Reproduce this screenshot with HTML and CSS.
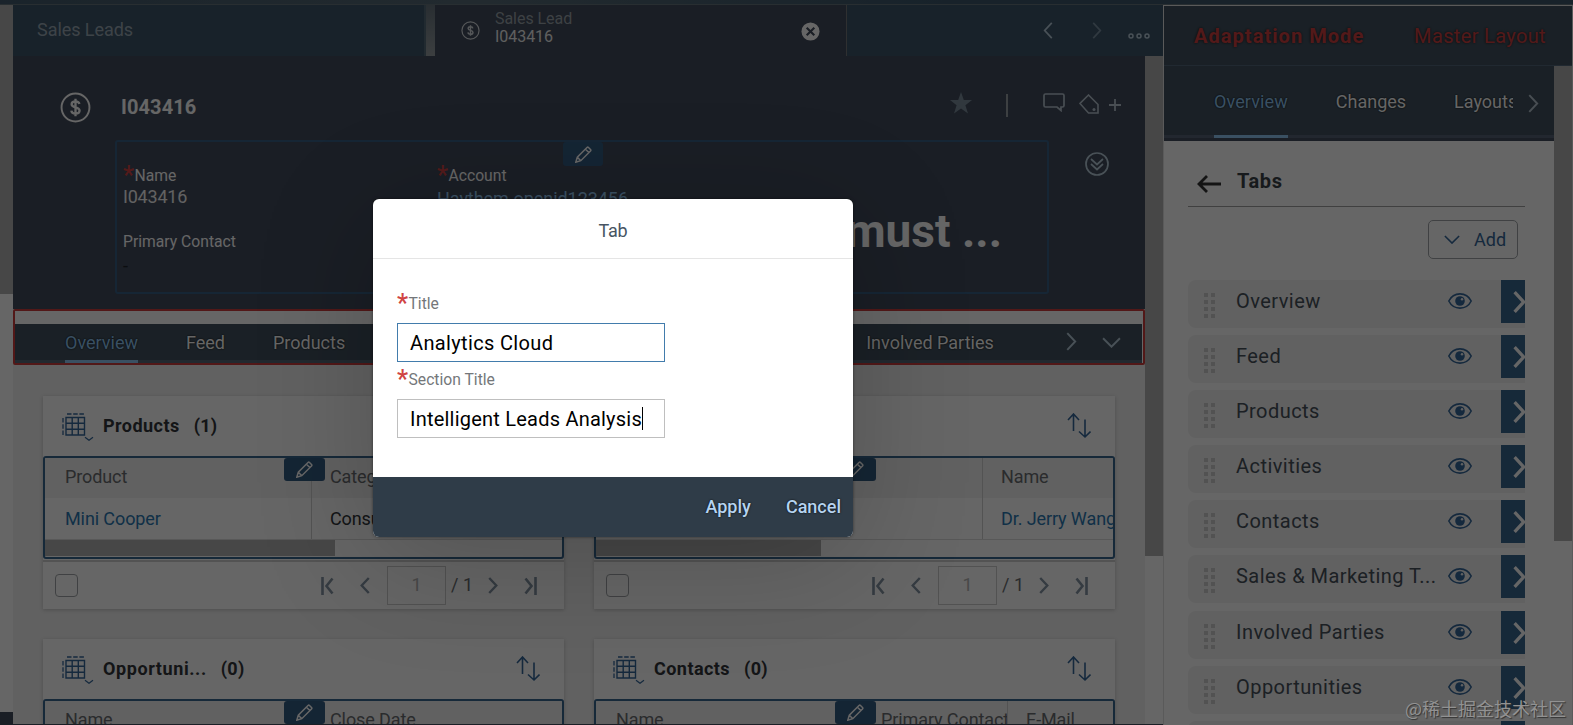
FILE: index.html
```html
<!DOCTYPE html>
<html lang="en">
<head>
    <meta charset="UTF-8">
    <meta name="viewport" content="width=device-width, initial-scale=1.0">
    <title>Sales Lead I043416</title>
    <link rel="stylesheet" href="styles.css">
</head>
<body>
    <svg class="sprite" aria-hidden="true">
        <symbol id="i-dollar" viewBox="0 0 32 32">
            <circle cx="16" cy="16" r="14.400" fill="none" stroke="currentColor" stroke-width="2"/>
            <path d="M20 12.400c-.3-1.800-1.900-2.700-4-2.700-2.300 0-4 1.100-4 3 0 4.400 8.200 1.900 8.200 6.500 0 2-1.800 3.100-4.200 3.100-2.300 0-4.100-1-4.300-3.100M16 7v18" fill="none" stroke="currentColor" stroke-width="2.400"/>
        </symbol>
        <symbol id="i-left" viewBox="0 0 10 18"><path d="M9 1L1.500 9 9 17" fill="none" stroke="currentColor"/></symbol>
        <symbol id="i-right" viewBox="0 0 10 18"><path d="M1 1l7.500 8L1 17" fill="none" stroke="currentColor"/></symbol>
        <symbol id="i-down" viewBox="0 0 18 10"><path d="M1 1l8 8 8-8" fill="none" stroke="currentColor"/></symbol>
        <symbol id="i-pencil" viewBox="0 0 17 17">
            <path d="M.8 16.200l1.500-5L12 1.500c.5-.5 1-.5 1.500 0l2 2c.5.5.5 1 0 1.500L5.800 14.700zM10.500 3.200l3.300 3.300M2.300 11.200l3.500 3.500" fill="none" stroke="currentColor" stroke-width="1.500"/>
        </symbol>
        <symbol id="i-eye" viewBox="0 0 24 16">
            <path d="M.8 8C3 3.600 7 .9 12 .9S21 3.600 23.200 8C21 12.400 17 15.100 12 15.100S3 12.400.8 8z" fill="none" stroke="currentColor" stroke-width="1.600"/>
            <circle cx="12" cy="8" r="4.800" fill="currentColor"/>
            <circle cx="14" cy="6.300" r="1.200" fill="#f2f2f2"/>
        </symbol>
        <symbol id="i-grid" viewBox="0 0 32 28">
            <path d="M4 4.500h18.500V22H4zM4 10.300h18.500M4 16.200h18.500M10.200 4.500V22M16.300 4.500V22" fill="none" stroke="currentColor" stroke-width="1.400"/>
            <path d="M5 1h17" fill="none" stroke="currentColor" stroke-width="1.600" stroke-dasharray="4.500 1.700"/>
            <path d="M1 5v17" fill="none" stroke="currentColor" stroke-width="1.300" stroke-dasharray="4.500 1.700"/>
            <path d="M23 24.300l4 3 4-3" fill="none" stroke="currentColor" stroke-width="1.200"/>
        </symbol>
        <symbol id="i-sort" viewBox="0 0 24 26">
            <path d="M1 7l5.500-6L12 7M6.500 1v17M12 18.500l6 5.500 5.500-5.500M18 24V6.500" fill="none" stroke="currentColor" stroke-width="1.600"/>
        </symbol>
        <symbol id="i-first" viewBox="0 0 13 18"><path d="M1.500 0v18M11.500 1.500L5.500 9l6 7.500" fill="none" stroke="currentColor" stroke-width="2.600"/></symbol>
        <symbol id="i-last" viewBox="0 0 13 18"><path d="M11.500 0v18M1.500 1.500l6 7.500-6 7.500" fill="none" stroke="currentColor" stroke-width="2.600"/></symbol>
        <symbol id="i-dots" viewBox="0 0 11 26">
            <path d="M0 0h4v4H0zM7 0h4v4H7zM0 7h4v4H0zM7 7h4v4H7zM0 14h4v4H0zM7 14h4v4H7zM0 21h4v4H0zM7 21h4v4H7z" fill="currentColor"/>
        </symbol>
    </svg>

    <div class="app">
        <div class="shell-bar"></div>
        <div class="workspace">
            <div class="gutter"></div>

            <div class="main">
                <div class="tab-strip">
                    <div class="page-tab">Sales Leads</div>
                    <div class="tab-split"></div>
                    <div class="page-tab active">
                        <svg class="tab-icon"><use href="#i-dollar"/></svg>
                        <div class="tab-text">
                            <span class="tab-kind">Sales Lead</span>
                            <span class="tab-name">I043416</span>
                        </div>
                        <svg class="tab-close" viewBox="0 0 20 20"><circle cx="10" cy="10" r="9.500" fill="#fff"/><path d="M6 6l8 8M14 6l-8 8" stroke="#414b5c" stroke-width="2.200"/></svg>
                    </div>
                    <div class="tab-nav">
                        <svg class="nav-arrow"><use href="#i-left"/></svg>
                        <svg class="nav-arrow dim"><use href="#i-right"/></svg>
                        <svg class="nav-more" viewBox="0 0 22 6"><g fill="none" stroke="currentColor" stroke-width="1.500"><circle cx="3" cy="3" r="2"/><circle cx="11" cy="3" r="2"/><circle cx="19" cy="3" r="2"/></g></svg>
                    </div>
                </div>

                <div class="page">
                    <div class="scroll-area">
                        <div class="object-header">
                            <div class="title-row">
                                <svg class="object-icon"><use href="#i-dollar"/></svg>
                                <h1>I043416</h1>
                                <svg class="star" viewBox="0 0 22 22"><path d="M11 0l2.800 8H22l-6.600 5.200L18 21.500l-7-4.900-7 4.900 2.600-8.300L0 8h8.200z" fill="currentColor"/></svg>
                                <span class="bar"></span>
                                <svg class="comment" viewBox="0 0 22 19"><path d="M2.500 1h17C20.500 1 21 1.500 21 2.500v10c0 1-.5 1.500-1.500 1.500H18v3.500L14 14H2.500C1.500 14 1 13.500 1 12.500v-10C1 1.500 1.500 1 2.500 1z" fill="none" stroke="currentColor" stroke-width="1.700"/></svg>
                                <svg class="tag" viewBox="0 0 20 20"><path d="M9.500 1L1 9.500 9.500 19H19v-8.500z" fill="none" stroke="currentColor" stroke-width="1.600"/><circle cx="15" cy="15.500" r="1.500" fill="currentColor"/></svg>
                                <svg class="plus" viewBox="0 0 12 12"><path d="M6 0v12M0 6h12" stroke="currentColor" stroke-width="1.800"/></svg>
                            </div>
                            <div class="facts-row">
                                <div class="facts">
                                    <div class="edit-tag"><svg><use href="#i-pencil"/></svg></div>
                                    <div class="fact-col">
                                        <div class="label"><b class="req">*</b>Name</div>
                                        <div class="value">I043416</div>
                                        <div class="label second">Primary Contact</div>
                                        <div class="value empty">-</div>
                                    </div>
                                    <div class="fact-col">
                                        <div class="label"><b class="req">*</b>Account</div>
                                        <div class="value link">Haythem.openid123456</div>
                                    </div>
                                    <div class="headline">must ...</div>
                                </div>
                                <svg class="expand" viewBox="0 0 24 24"><g fill="none" stroke="currentColor" stroke-width="1.700"><circle cx="12" cy="12" r="11"/><path d="M6 7l6 5.500L18 7M6 12l6 5.500 6-5.500"/></g></svg>
                            </div>
                        </div>

                        <div class="tabs-frame">
                            <div class="tabs">
                                <span class="tab selected">Overview</span>
                                <span class="tab">Feed</span>
                                <span class="tab">Products</span>
                                <span class="tab last">Involved Parties</span>
                                <svg class="tabs-next"><use href="#i-right"/></svg>
                                <svg class="tabs-down"><use href="#i-down"/></svg>
                            </div>
                        </div>

                        <div class="cards">
                            <section class="card">
                                <div class="card-head">
                                    <svg class="grid-icon"><use href="#i-grid"/></svg>
                                    <h2>Products</h2><span class="count">(1)</span>
                                    <svg class="sort"><use href="#i-sort"/></svg>
                                </div>
                                <div class="table">
                                    <div class="edit-tag"><svg><use href="#i-pencil"/></svg></div>
                                    <div class="row head"><span class="cell wide">Product</span><span class="cell">Category</span></div>
                                    <div class="row"><span class="cell wide link">Mini Cooper</span><span class="cell">Consumer Goods</span></div>
                                    <div class="h-scroll"><i class="thumb long"></i></div>
                                </div>
                                <div class="pager">
                                    <span class="check"></span>
                                    <svg class="p-first"><use href="#i-first"/></svg>
                                    <svg class="p-prev"><use href="#i-left"/></svg>
                                    <span class="p-input">1</span>
                                    <span class="p-total">/ 1</span>
                                    <svg class="p-next"><use href="#i-right"/></svg>
                                    <svg class="p-last"><use href="#i-last"/></svg>
                                </div>
                            </section>

                            <section class="card">
                                <div class="card-head">
                                    <svg class="grid-icon"><use href="#i-grid"/></svg>
                                    <svg class="sort"><use href="#i-sort"/></svg>
                                </div>
                                <div class="table">
                                    <div class="edit-tag"><svg><use href="#i-pencil"/></svg></div>
                                    <div class="row head"><span class="cell wider"></span><span class="cell">Name</span></div>
                                    <div class="row"><span class="cell wider"></span><span class="cell link">Dr. Jerry Wang</span></div>
                                    <div class="h-scroll"><i class="thumb"></i></div>
                                </div>
                                <div class="pager">
                                    <span class="check"></span>
                                    <svg class="p-first"><use href="#i-first"/></svg>
                                    <svg class="p-prev"><use href="#i-left"/></svg>
                                    <span class="p-input">1</span>
                                    <span class="p-total">/ 1</span>
                                    <svg class="p-next"><use href="#i-right"/></svg>
                                    <svg class="p-last"><use href="#i-last"/></svg>
                                </div>
                            </section>

                            <section class="card">
                                <div class="card-head">
                                    <svg class="grid-icon"><use href="#i-grid"/></svg>
                                    <h2 class="spaced">Opportuni...</h2><span class="count">(0)</span>
                                    <svg class="sort"><use href="#i-sort"/></svg>
                                </div>
                                <div class="table">
                                    <div class="edit-tag"><svg><use href="#i-pencil"/></svg></div>
                                    <div class="row head"><span class="cell wide">Name</span><span class="cell">Close Date</span></div>
                                </div>
                            </section>

                            <section class="card">
                                <div class="card-head">
                                    <svg class="grid-icon"><use href="#i-grid"/></svg>
                                    <h2>Contacts</h2><span class="count">(0)</span>
                                    <svg class="sort"><use href="#i-sort"/></svg>
                                </div>
                                <div class="table">
                                    <div class="edit-tag"><svg><use href="#i-pencil"/></svg></div>
                                    <div class="row head"><span class="cell wide">Name</span><span class="cell contact">Primary Contact</span><span class="cell">E-Mail</span></div>
                                </div>
                            </section>
                        </div>
                    </div>
                    <div class="v-scroll"></div>
                </div>
            </div>

            <aside class="panel">
                <div class="panel-title"><strong>Adaptation Mode</strong><span>Master Layout</span></div>
                <div class="panel-page">
                    <div class="panel-content">
                        <div class="panel-tabs">
                            <span class="tab selected">Overview</span>
                            <span class="tab">Changes</span>
                            <span class="tab cut">Layouts</span>
                            <svg class="tabs-next"><use href="#i-right"/></svg>
                        </div>
                        <div class="panel-body">
                            <div class="panel-heading">
                                <svg class="back" viewBox="0 0 24 18"><path d="M10 1L2 9l8 8M2 9h22" fill="none" stroke="currentColor" stroke-width="2.800"/></svg>
                                <h3>Tabs</h3>
                            </div>
                            <button class="add"><svg><use href="#i-down"/></svg>Add</button>
                            <div class="items">
                                <div class="item"><svg class="grip"><use href="#i-dots"/></svg><span>Overview</span><svg class="eye"><use href="#i-eye"/></svg><i class="go"><svg><use href="#i-right"/></svg></i></div>
                                <div class="item"><svg class="grip"><use href="#i-dots"/></svg><span>Feed</span><svg class="eye"><use href="#i-eye"/></svg><i class="go"><svg><use href="#i-right"/></svg></i></div>
                                <div class="item"><svg class="grip"><use href="#i-dots"/></svg><span>Products</span><svg class="eye"><use href="#i-eye"/></svg><i class="go"><svg><use href="#i-right"/></svg></i></div>
                                <div class="item"><svg class="grip"><use href="#i-dots"/></svg><span>Activities</span><svg class="eye"><use href="#i-eye"/></svg><i class="go"><svg><use href="#i-right"/></svg></i></div>
                                <div class="item"><svg class="grip"><use href="#i-dots"/></svg><span>Contacts</span><svg class="eye"><use href="#i-eye"/></svg><i class="go"><svg><use href="#i-right"/></svg></i></div>
                                <div class="item"><svg class="grip"><use href="#i-dots"/></svg><span>Sales &amp; Marketing T...</span><svg class="eye"><use href="#i-eye"/></svg><i class="go"><svg><use href="#i-right"/></svg></i></div>
                                <div class="item"><svg class="grip"><use href="#i-dots"/></svg><span>Involved Parties</span><svg class="eye"><use href="#i-eye"/></svg><i class="go"><svg><use href="#i-right"/></svg></i></div>
                                <div class="item"><svg class="grip"><use href="#i-dots"/></svg><span>Opportunities</span><svg class="eye"><use href="#i-eye"/></svg><i class="go"><svg><use href="#i-right"/></svg></i></div>
                                <div class="item"><i class="go"></i></div>
                            </div>
                        </div>
                    </div>
                    <div class="panel-scroll"></div>
                </div>
            </aside>
        </div>
    </div>

    <div class="backdrop"></div>

    <div class="dialog">
        <div class="dialog-title">Tab</div>
        <div class="dialog-body">
            <div class="label"><b class="req">*</b>Title</div>
            <div class="field focus">Analytics Cloud</div>
            <div class="label"><b class="req">*</b>Section Title</div>
            <div class="field">Intelligent Leads Analysis<i class="caret"></i></div>
        </div>
        <div class="dialog-footer"><span>Apply</span><span>Cancel</span></div>
    </div>

    <div class="watermark">@稀土掘金技术社区</div>
</body>
</html>
```

FILE: styles.css
```css
* {
    box-sizing: border-box;
}

body {
    margin: 0;
    width: 1573px;
    height: 725px;
    overflow: hidden;
    position: relative;
    background: #fff;
    font-family: Roboto, "Liberation Sans", sans-serif;
    font-size: 18px;
    color: #32363a;
}

h1, h2, h3 {
    margin: 0;
}

svg {
    display: block;
    flex: none;
    stroke-width: 1.8px;
}

.sprite {
    position: absolute;
    width: 0;
    height: 0;
}

.app {
    height: 725px;
    display: flex;
    flex-direction: column;
}

.shell-bar {
    height: 5px;
    flex: none;
    background: linear-gradient(90deg, #42596b, #566a76 30%, #3c566a 60%, #3c566a);
    border-bottom: 1px solid #64737c;
}

.workspace {
    flex: 1;
    display: flex;
    min-height: 0;
}

.gutter {
    width: 13px;
    background: linear-gradient(#b1b1b1 289px, #fff 289px, #fff 707px, #414b5c 707px);
}

.main {
    width: 1150px;
    display: flex;
    flex-direction: column;
}

/* open pages */
.tab-strip {
    height: 51px;
    flex: none;
    display: flex;
    background: #3d566a;
}

.page-tab {
    width: 411px;
    padding-left: 24px;
    line-height: 49px;
    color: #9aa9b4;
    letter-spacing: -0.05px;
}

.page-tab.active {
    width: 412px;
    padding-left: 26px;
    background: #414b5c;
    border-right: 1px solid #75787a;
    display: flex;
    align-items: center;
    font-size: 16px;
}

.tab-split {
    width: 11px;
    border-left: 2px solid #536a78;
    background: linear-gradient(#66737d, #969da1);
}

.tab-icon {
    width: 19px;
    height: 19px;
    color: #d5dade;
}

.tab-text {
    display: flex;
    flex-direction: column;
    line-height: 18px;
    margin: -3px 0 0 15px;
    height: 39px;
}

.tab-kind {
    color: #9aa3ab;
}

.tab-name {
    color: #eee;
}

.tab-close {
    width: 19px;
    height: 19px;
    margin: 1px 26px 0 auto;
}

.tab-nav {
    flex: 1;
    display: flex;
    color: #b6cbd9;
}

.nav-arrow {
    width: 10px;
    height: 17px;
    margin: 17px 0 0 196px;
}

.nav-arrow.dim {
    margin-left: 39px;
    opacity: .5;
}

.nav-more {
    width: 22px;
    height: 6px;
    margin: 28px 0 0 26px;
}

.page {
    flex: 1;
    display: flex;
    min-height: 0;
}

.scroll-area {
    width: 1132px;
    overflow: hidden;
    background: #f2f2f2;
    border-bottom: 1px solid #414b5c;
}

.v-scroll {
    width: 18px;
    border-bottom: 1px solid #414b5c;
    background: linear-gradient(#b1b1b1 500px, #fff 500px);
}

/* object header */
.object-header {
    height: 253px;
    background: #414b5c;
}

.title-row {
    display: flex;
    align-items: flex-start;
    padding: 36px 24px 0 47px;
    height: 84px;
    color: #b6c3cf;
}

.object-icon {
    width: 31px;
    height: 31px;
    color: #fff;
}

h1 {
    flex: 1;
    margin-left: 30px;
    font-size: 20px;
    line-height: 30px;
    letter-spacing: 0.1px;
    color: #fff;
}

.star {
    width: 22px;
    height: 22px;
    color: #7a8c9b;
}

.bar {
    width: 2px;
    height: 23px;
    margin: 2px 35px 0 34px;
    background: #9aa1a5;
}

.comment {
    width: 22px;
    height: 19px;
    margin-top: 1px;
}

.tag {
    width: 20px;
    height: 20px;
    margin: 2px 10px 0 14px;
}

.plus {
    width: 12px;
    height: 12px;
    margin-top: 7px;
}

.facts-row {
    display: flex;
    padding-left: 102px;
}

.facts {
    width: 934px;
    height: 154px;
    border: 2px solid #375f86;
    border-radius: 3px;
    display: flex;
    padding: 23px 45px 0 6px;
    position: relative;
}

.edit-tag {
    position: absolute;
    top: 0;
    left: 446px;
    width: 40px;
    height: 24px;
    display: flex;
    justify-content: center;
    align-items: center;
    background: #335c82;
    border-radius: 3px;
    color: #fff;
}

.edit-tag svg {
    width: 17px;
    height: 17px;
}

.fact-col {
    width: 314px;
}

.fact-col:nth-of-type(3) {
    width: 190px;
}

.label {
    display: flex;
    height: 20px;
    line-height: 21px;
    font-size: 15.7px;
    color: #fff;
    white-space: nowrap;
}

.req {
    width: 11.5px;
    height: 20px;
    font-size: 25px;
    font-weight: 500;
    line-height: 22px;
    color: #d04343;
}

.value {
    line-height: 24px;
    letter-spacing: -0.2px;
    color: #f4f4f4;
}

.label.second {
    margin-top: 22px;
}

.value.empty {
    line-height: 30px;
    color: #1d2129;
}

.value.link {
    color: #91c8f6;
    line-height: 28px;
    letter-spacing: -0.05px;
}

.headline {
    margin-left: auto;
    padding-top: 36px;
    font-size: 46px;
    font-weight: bold;
    line-height: 60px;
    color: #fff;
}

.expand {
    width: 24px;
    height: 24px;
    margin: 12px 0 0 36px;
    color: #b6cbd9;
}

/* anchor tabs */
.tabs-frame {
    height: 56px;
    padding: 13px 1px 0 0;
    background: #fff;
    border: 2px solid #cc3d3d;
    border-radius: 2px;
}

.tabs {
    height: 39px;
    display: flex;
    padding-left: 50px;
    background: linear-gradient(#425260 36px, #556775 36px);
    color: #b6cbd9;
}

.tab {
    margin-right: 48px;
    line-height: 37px;
    color: #fff;
    white-space: nowrap;
    text-shadow: 0 0 2px #000;
}

.tab.selected {
    color: #91c8f6;
    border-bottom: 3px solid #91c8f6;
}

.tab.last {
    margin-left: 473px;
    margin-right: 72px;
}

.tabs-next {
    width: 11px;
    height: 19px;
    margin-top: 8px;
}

.tabs-down {
    width: 19px;
    height: 11px;
    margin: 13px 0 0 25px;
}

/* cards */
.cards {
    display: grid;
    grid-template-columns: 521px 521px;
    gap: 30px;
    padding: 31px 0 0 30px;
}

.card {
    height: 213px;
    background: #fff;
    box-shadow: 0 1px 4px rgba(0, 0, 0, .2);
}

.card-head {
    height: 60px;
    display: flex;
    padding: 17px 24px 0 19px;
    color: #35679a;
}

.grid-icon {
    width: 32px;
    height: 28px;
}

h2, .count {
    margin-left: 9px;
    font-size: 18px;
    font-weight: bold;
    line-height: 25px;
    letter-spacing: 0.45px;
    color: #32363a;
}

h2.spaced {
    letter-spacing: 0.6px;
}

.count {
    margin-left: 14px;
    letter-spacing: 0.3px;
}

.sort {
    width: 24px;
    height: 26px;
    margin-left: auto;
}

.table {
    height: 103px;
    border: 2px solid #38668f;
    border-radius: 3px;
    position: relative;
    overflow: hidden;
}

.table .edit-tag {
    left: 239px;
    width: 41px;
    height: 23px;
}

.row {
    display: flex;
    height: 42px;
    border-bottom: 1px solid #dcdcdc;
    line-height: 42px;
    white-space: nowrap;
}

.row.head {
    height: 40px;
    line-height: 38px;
    background: #f2f2f2;
    border-bottom: 0;
    color: #6a6d70;
}

.cell {
    padding-left: 18px;
    letter-spacing: -0.1px;
}

.cell.wide {
    flex: none;
    width: 267px;
    padding-left: 20px;
    border-right: 1px solid #d0d0d0;
}

.cell.wider {
    flex: none;
    width: 387px;
    border-right: 1px solid #d0d0d0;
}

.cell.contact {
    flex: none;
    width: 145px;
    overflow: hidden;
    border-right: 1px solid #d0d0d0;
}

.cell.link {
    color: #2b79b2;
}

.thumb {
    display: block;
    width: 225px;
    height: 16px;
    background: #b1b1b1;
}

.thumb.long {
    width: 290px;
}

.pager {
    height: 50px;
    display: flex;
    align-items: center;
    border-top: 2px solid #d0d0d0;
    margin-top: 1px;
    padding: 0 27px 1px 12px;
    color: #8494a4;
}

.check {
    width: 23px;
    height: 23px;
    border: 1px solid #a0a4a8;
    border-radius: 4px;
}

.p-first, .p-last {
    width: 13px;
    height: 18px;
}

.p-first {
    margin-left: 243px;
}

.p-prev, .p-next {
    width: 10px;
    height: 17px;
    stroke-width: 2.5px;
}

.p-prev {
    margin: 0 17px 0 26px;
}

.p-input {
    width: 59px;
    height: 39px;
    border: 1px solid #ccc;
    line-height: 36px;
    text-align: center;
    color: #b4b4b4;
}

.p-total {
    width: 42px;
    padding-left: 5px;
    line-height: 36px;
    height: 37px;
    color: #6a6d70;
}

.p-last {
    margin-left: auto;
}

/* adaptation panel */
.panel {
    width: 410px;
    border: 1px solid #e2e2e2;
    border-bottom: 0;
    display: flex;
    flex-direction: column;
    background: #fff;
}

.panel-title {
    height: 60px;
    flex: none;
    display: flex;
    justify-content: space-between;
    padding: 0 26px 0 30px;
    background: #425260;
    border-bottom: 1px solid #53687c;
    font-size: 20px;
    line-height: 60px;
    letter-spacing: 0.35px;
    color: #d04040;
    text-shadow: 0 0 3px rgba(0, 0, 0, .7);
}

.panel-title strong {
    letter-spacing: 1.05px;
}

.panel-page {
    flex: 1;
    display: flex;
    min-height: 0;
}

.panel-content {
    width: 390px;
    overflow: hidden;
}

.panel-scroll {
    flex: 1;
    background: linear-gradient(#b1b1b1 475px, #fff 475px);
}

.panel-tabs {
    height: 75px;
    display: flex;
    padding-left: 50px;
    background: linear-gradient(#425260 69px, #556375 69px, #556375 72px, #414b5c 72px);
    color: #b6c3cf;
}

.panel-tabs .tab {
    height: 72px;
    line-height: 71px;
}

.panel-tabs .tab.selected {
    letter-spacing: 0.1px;
}

.panel-tabs .tab.cut {
    width: 59px;
    margin-right: 15px;
    overflow: hidden;
}

.panel-tabs .tabs-next {
    margin-top: 28px;
}

.panel-body {
    padding: 25px 29px 0 24px;
    display: flex;
    flex-direction: column;
}

.panel-heading {
    display: flex;
    height: 41px;
    padding-left: 9px;
    border-bottom: 1px solid #a0a0a0;
    color: #333;
}

.back {
    width: 24px;
    height: 18px;
    margin-top: 9px;
}

h3 {
    margin-left: 16px;
    font-size: 20px;
    line-height: 31px;
    letter-spacing: 0.6px;
    color: #3a4248;
}

.add {
    align-self: flex-end;
    width: 90px;
    height: 39px;
    margin: 13px 7px 0 0;
    padding: 0 0 1px 15px;
    display: flex;
    align-items: center;
    border: 1px solid #a0a4a8;
    border-radius: 5px;
    background: #fff;
    font: 18px Roboto, "Liberation Sans", sans-serif;
    color: #35679a;
}

.add svg {
    width: 16px;
    height: 9px;
    margin-right: 14px;
}

.items {
    display: flex;
    flex-direction: column;
    gap: 7.1px;
    margin-top: 21px;
}

.item {
    height: 48px;
    display: flex;
    background: #f2f2f2;
    border-radius: 8px 0 0 8px;
    font-size: 20px;
    line-height: 42px;
    letter-spacing: 0.45px;
    color: #46505a;
    white-space: nowrap;
    overflow: hidden;
}

.grip {
    width: 11px;
    height: 26px;
    margin: 13px 21px 0 16px;
    color: #ccc;
}

.eye {
    width: 24px;
    height: 16px;
    margin: 13px 29px 0 auto;
    color: #35679a;
}

.go {
    width: 24px;
    height: 43px;
    flex: none;
    padding: 11px 0 0 11px;
    overflow: hidden;
    background: #38668f;
    color: #fff;
}

.item .go:only-child {
    margin-left: auto;
}

.go svg {
    width: 15px;
    height: 22px;
    stroke-width: 2.7px;
}

/* dialog */
.backdrop {
    position: absolute;
    inset: 0;
    background: rgba(0, 0, 0, .6);
}

.dialog {
    position: absolute;
    left: 373px;
    top: 199px;
    width: 480px;
    height: 338px;
    display: flex;
    flex-direction: column;
    border-radius: 6px;
    background: #fff;
    overflow: hidden;
    box-shadow: 0 20px 120px rgba(0, 0, 0, .2), 0 0 3px rgba(0, 0, 0, .5);
}

.dialog-title {
    height: 60px;
    line-height: 63px;
    border-bottom: 1px solid #e5e5e5;
    text-align: center;
    letter-spacing: -0.2px;
    color: #475563;
}

.dialog-body {
    flex: 1;
    padding: 34px 24px 0;
}

.dialog-body .label {
    height: 37px;
    padding-top: 7px;
    color: #74777a;
}

.dialog-body .label:first-child {
    height: 30px;
    padding-top: 0;
}

.field {
    width: 268px;
    height: 39px;
    padding-left: 12px;
    border: 1px solid #bfbfbf;
    display: flex;
    align-items: center;
    font-size: 20px;
    letter-spacing: 0.22px;
    color: #000;
    white-space: nowrap;
}

.field.focus {
    border-color: #427cac;
    letter-spacing: 0.35px;
}

.caret {
    width: 1px;
    height: 23px;
    background: #000;
}

.dialog-footer {
    height: 60px;
    display: flex;
    justify-content: flex-end;
    gap: 35px;
    padding-right: 12px;
    background: #2f3c48;
    line-height: 60px;
    font-weight: 500;
    color: #b5d3f0;
    text-shadow: 0 0 2px #000;
}

.watermark {
    position: absolute;
    right: 7px;
    bottom: 4px;
    font-family: "Noto Sans CJK SC", sans-serif;
    font-size: 18px;
    line-height: 26px;
    color: #929292;
    text-shadow: 1px 1px 1px #333;
}
```
